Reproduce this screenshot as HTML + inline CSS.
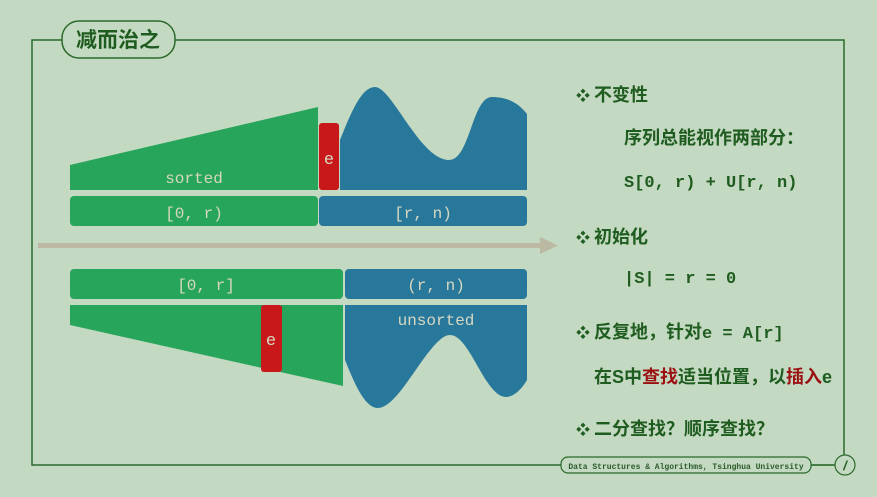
<!DOCTYPE html>
<html><head><meta charset="utf-8"><style>
body{margin:0;width:877px;height:497px;background:#c3d9c1;overflow:hidden;font-family:"Liberation Sans","Noto Sans CJK SC",sans-serif}
.t{position:absolute;color:#1f5c1f;font-weight:bold;font-size:18px;white-space:nowrap;line-height:20px}
.m{font-family:"Liberation Mono","DejaVu Sans Mono",monospace;font-size:17px}
.b{font-size:14px;margin-right:4px}
</style></head><body>
<svg width="877" height="497" style="position:absolute;left:0;top:0">
<path d="M175 40 H844 V465 H32 V40 H62" fill="none" stroke="#2b6a2b" stroke-width="1.5"/>
<rect x="62" y="21" width="113" height="37" rx="17" fill="#c3d9c1" stroke="#2b6a2b" stroke-width="1.5"/>
<text x="118" y="47" text-anchor="middle" font-size="21" font-weight="bold" fill="#1f5c1f" font-family="Liberation Sans,Noto Sans CJK SC,sans-serif">减而治之</text>
<path d="M70 165 L318 107 V190 H70 Z" fill="#27a55a"/>
<rect x="319" y="123" width="20" height="67" rx="3" fill="#c8181a"/>
<path d="M340 190 V140 C352 110 362 87 375 87 C392 87 420 160 449 160 C470 160 472 97 492 97 C510 97 520 105 527 114 V190 Z" fill="#28789c"/>
<rect x="70" y="196" width="248" height="30" rx="4" fill="#27a55a"/>
<rect x="319" y="196" width="208" height="30" rx="4" fill="#28789c"/>
<g font-family="Liberation Mono,monospace" font-size="16" fill="#d8d8c0" text-anchor="middle">
<text x="194" y="183">sorted</text>
<text x="329" y="164" font-size="17">e</text>
<text x="194" y="218">[0, r)</text>
<text x="423" y="218">[r, n)</text>
</g>
<rect x="38" y="243" width="505" height="5" fill="#bcb9a3"/>
<path d="M540 237 L558 245.5 L540 254 Z" fill="#bcb9a3"/>
<rect x="70" y="269" width="273" height="30" rx="4" fill="#27a55a"/>
<rect x="345" y="269" width="182" height="30" rx="4" fill="#28789c"/>
<path d="M70 305 H343 V386 L70 325 Z" fill="#27a55a"/>
<rect x="261" y="305" width="21" height="67" rx="3" fill="#c8181a"/>
<path d="M345 305 H527 V380 C520 392 512 397 506 397 C485 397 470 335 450 335 C430 335 400 408 378 408 C365 408 355 385 345 360 Z" fill="#28789c"/>
<g font-family="Liberation Mono,monospace" font-size="16" fill="#d8d8c0" text-anchor="middle">
<text x="206" y="290">[0, r]</text>
<text x="436" y="290">(r, n)</text>
<text x="436" y="325">unsorted</text>
<text x="271" y="345" font-size="17">e</text>
</g>
<rect x="561" y="457" width="250" height="16" rx="7" fill="#c3d9c1" stroke="#2b6a2b" stroke-width="1.2"/>
<line x1="811" y1="465" x2="835" y2="465" stroke="#2b6a2b" stroke-width="1.2"/>
<circle cx="845" cy="465" r="10" fill="#c3d9c1" stroke="#2b6a2b" stroke-width="1.2"/>
<text x="686" y="469" text-anchor="middle" font-size="8" font-weight="bold" fill="#2b5a2b" font-family="Liberation Mono,monospace">Data Structures &amp; Algorithms, Tsinghua University</text>
<text x="845" y="470" text-anchor="middle" font-size="13" font-style="italic" font-weight="bold" fill="#1f5c1f">/</text>
</svg>
<div class="t" style="left:576px;top:85px"><span class="b">❖</span>不变性</div>
<div class="t" style="left:624px;top:128px">序列总能视作两部分：</div>
<div class="t m" style="left:624px;top:174px">S[0, r) + U[r, n)</div>
<div class="t" style="left:576px;top:227px"><span class="b">❖</span>初始化</div>
<div class="t m" style="left:624px;top:270px">|S| = r = 0</div>
<div class="t" style="left:576px;top:322px"><span class="b">❖</span>反复地，针对<span class="m">e = A[r]</span></div>
<div class="t" style="left:594px;top:367px">在S中<span style="color:#9b1010">查找</span>适当位置，以<span style="color:#9b1010">插入</span>e</div>
<div class="t" style="left:576px;top:419px"><span class="b">❖</span>二分查找？顺序查找？</div>
</body></html>
